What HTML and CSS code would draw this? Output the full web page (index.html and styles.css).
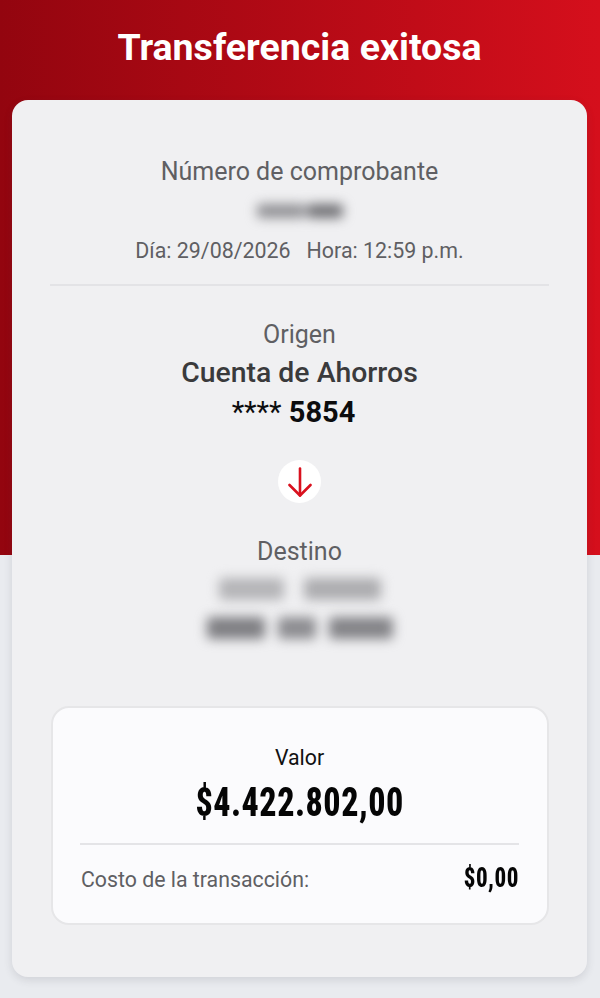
FILE: index.html
```html
<!DOCTYPE html>
<html lang="es">
  <head>
    <meta charset="UTF-8" />
    <meta name="viewport" content="width=device-width, initial-scale=1.0" />
    <title>Transferencia exitosa</title>
    <link rel="stylesheet" href="styles.css">
  </head>
  <body>
    <div class="page">
      <h1 class="title">Transferencia exitosa</h1>

      <main class="card">
        <section class="receipt">
          <p class="label">Número de comprobante</p>
          <div class="blur blur-receipt">
            <span class="piece piece-receipt-a"></span>
            <span class="piece piece-receipt-b"></span>
          </div>
          <p class="date"><span>Día: 29/08/2026</span><span>Hora: 12:59 p.m.</span></p>
        </section>

        <section class="origin">
          <p class="label">Origen</p>
          <p class="account">Cuenta de Ahorros</p>
          <p class="number"><span class="stars">****</span> 5854</p>
        </section>

        <div class="arrow">
          <svg width="26" height="30" viewBox="0 0 26 30" fill="none" stroke="#d9111e" stroke-width="2.6" stroke-linecap="round" stroke-linejoin="round">
            <path d="M13 1.500v27" />
            <path d="M2.500 18 13 28.500 23.500 18" />
          </svg>
        </div>

        <section class="destiny">
          <p class="label">Destino</p>
          <div class="blur blur-name">
            <span class="piece piece-name-a"></span>
            <span class="piece piece-name-b"></span>
          </div>
          <div class="blur blur-account">
            <span class="piece piece-acc-a"></span>
            <span class="piece piece-acc-b"></span>
            <span class="piece piece-acc-c"></span>
          </div>
        </section>

        <section class="value-box">
          <p class="value-label">Valor</p>
          <p class="value"><span class="condensed">$4.422.802,00</span></p>
          <div class="cost">
            <span class="cost-label">Costo de la transacción:</span>
            <span class="cost-value condensed">$0,00</span>
          </div>
        </section>
      </main>
    </div>
  </body>
</html>
```

FILE: styles.css
```css
* {
  margin: 0;
  padding: 0;
  box-sizing: border-box;
  font-family: Roboto, "Liberation Sans", sans-serif;
}

body {
  background-color: #e9ebef;
}

.page {
  height: 998px;
  overflow: hidden;
  padding: 0 13px 0 12px;
  background: linear-gradient(90deg, #93050f 0%, #d50f1c 100%) top left / 100% 555px no-repeat;
}

.title {
  height: 100px;
  padding-top: 25px;
  color: #fff;
  font-size: 37.5px;
  line-height: 44px;
  font-weight: 700;
  text-align: center;
}

.card {
  height: 877px;
  padding: 0 38px;
  background-color: #f0f0f2;
  border-radius: 16px;
  box-shadow: 0 3px 8px rgba(60, 60, 70, 0.14);
  text-align: center;
}

.label {
  color: #5f5f63;
  font-size: 25px;
  line-height: 28px;
}

.receipt {
  padding: 58px 0 21px;
  border-bottom: 2px solid #e3e3e6;
}

.date {
  display: flex;
  justify-content: center;
  gap: 16px;
  margin-top: 9px;
  color: #5f5f63;
  font-size: 21.4px;
  line-height: 24px;
}

/* datos ocultos del comprobante */
.blur {
  display: flex;
  justify-content: center;
  filter: blur(6px);
}

.piece {
  display: block;
  height: 100%;
  border-radius: 4px;
}

.blur-receipt {
  height: 14px;
  margin: 18px 0 21px;
  gap: 2px;
}

.piece-receipt-a {
  width: 48px;
  background-color: #8f8f93;
}

.piece-receipt-b {
  width: 36px;
  background-color: #6e6e72;
}

.origin {
  padding-top: 35px;
}

.account {
  margin-top: 7px;
  color: #3a3a3c;
  font-size: 28.4px;
  line-height: 34px;
  font-weight: 500;
}

.number {
  margin-top: 6px;
  padding-right: 12px;
  color: #0c0c0e;
  font-size: 29px;
  line-height: 32px;
  font-weight: 700;
}

.stars {
  font-weight: 400;
}

.arrow {
  display: flex;
  align-items: center;
  justify-content: center;
  width: 43px;
  height: 43px;
  margin: 32px auto 0;
  background-color: #fff;
  border-radius: 50%;
}

.destiny {
  padding-top: 35px;
}

.blur-name {
  height: 22px;
  margin-top: 12px;
  gap: 20px;
}

.piece-name-a {
  width: 65px;
  background-color: #b4b4b7;
}

.piece-name-b {
  width: 77px;
  background-color: #acacaf;
}

.blur-account {
  height: 22px;
  margin-top: 17px;
  gap: 13px;
}

.piece-acc-a {
  width: 58px;
  background-color: #7e7e82;
}

.piece-acc-b {
  width: 38px;
  background-color: #8c8c90;
}

.piece-acc-c {
  width: 64px;
  background-color: #838387;
}

.value-box {
  width: 498px;
  height: 219px;
  margin: 67px 0 0 1px;
  padding: 37px 28px 0 27px;
  background-color: #fbfbfd;
  border: 2px solid #e6e6e8;
  border-radius: 18px;
}

.value-label {
  color: #111;
  font-size: 21.3px;
  line-height: 26px;
}

.value {
  margin-top: 9px;
  padding-bottom: 17px;
  border-bottom: 2px solid #e4e4e7;
  color: #050505;
  font-size: 40px;
  line-height: 46px;
  font-weight: 800;
}

.condensed {
  display: inline-block;
  font-stretch: condensed;
  letter-spacing: 0.6px;
  transform: scaleX(0.85);
}

.cost {
  display: flex;
  justify-content: space-between;
  align-items: center;
  margin-top: 18px;
}

.cost-label {
  padding-left: 1px;
  color: #5f5f63;
  font-size: 21.3px;
  line-height: 30px;
}

.cost-value {
  margin-bottom: 4px;
  color: #050505;
  font-size: 27px;
  line-height: 30px;
  font-weight: 800;
  transform-origin: right center;
}
```
